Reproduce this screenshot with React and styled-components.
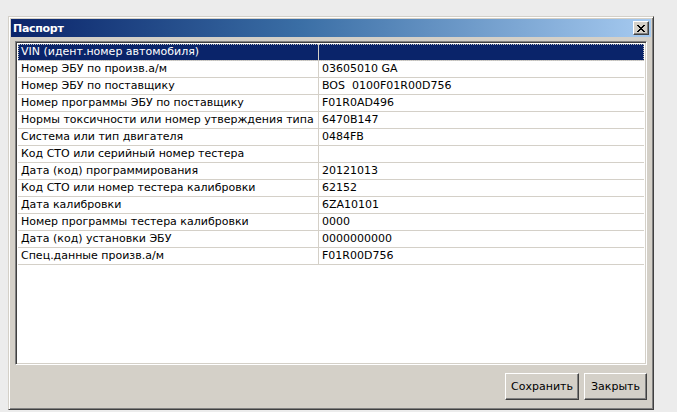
import styled, { createGlobalStyle } from "styled-components";

const GlobalStyle = createGlobalStyle`
    html, body {
        margin: 0;
        padding: 0;
        background: #ececec;
    }
    body {
        font-family: "DejaVu Sans", Tahoma, sans-serif;
    }
`;

const passport = [
    { name: "VIN (идент.номер автомобиля)", value: "" },
    { name: "Номер ЭБУ по произв.а/м", value: "03605010 GA" },
    { name: "Номер ЭБУ по поставщику", value: "BOS  0100F01R00D756" },
    { name: "Номер программы ЭБУ по поставщику", value: "F01R0AD496" },
    { name: "Нормы токсичности или номер утверждения типа", value: "6470B147" },
    { name: "Система или тип двигателя", value: "0484FB" },
    { name: "Код СТО или серийный номер тестера", value: "" },
    { name: "Дата (код) программирования", value: "20121013" },
    { name: "Код СТО или номер тестера калибровки", value: "62152" },
    { name: "Дата калибровки", value: "6ZA10101" },
    { name: "Номер программы тестера калибровки", value: "0000" },
    { name: "Дата (код) установки ЭБУ", value: "0000000000" },
    { name: "Спец.данные произв.а/м", value: "F01R00D756" },
];

const Page = styled.div`
    padding: 16px 0 0 8px;
`;

const Window = styled.div`
    width: 646px;
    height: 394px;
    box-sizing: border-box;
    background: #d4d0c8;
    border: 1px solid;
    border-color: #d4d0c8 #404040 #404040 #d4d0c8;
    box-shadow: inset 1px 1px #ffffff, inset -1px -1px #808080;
    padding: 2px;
    display: flex;
    flex-direction: column;
`;

const TitleBar = styled.div`
    height: 18px;
    display: flex;
    align-items: center;
    justify-content: space-between;
    padding: 0 2px 0 2px;
    background: linear-gradient(to right, #0a246a 0%, #3a6ea5 45%, #a6caf0 100%);
`;

const Title = styled.span`
    color: #ffffff;
    font-weight: bold;
    font-size: 11px;
    letter-spacing: -0.3px;
`;

const CloseButton = styled.button`
    width: 16px;
    height: 14px;
    padding: 0;
    margin: 0;
    background: #d4d0c8;
    border: 1px solid;
    border-color: #ffffff #404040 #404040 #ffffff;
    box-shadow: inset -1px -1px #808080;
    display: flex;
    align-items: center;
    justify-content: center;
`;

const Body = styled.div`
    flex: 1;
    display: flex;
    flex-direction: column;
    padding: 4px 4px 7px 4px;
`;

const ListBox = styled.div`
    height: 324px;
    box-sizing: border-box;
    background: #ffffff;
    border: 1px solid;
    border-color: #808080 #ffffff #ffffff #808080;
    box-shadow: inset 1px 1px #404040, inset -1px -1px #d4d0c8;
    padding: 2px;
`;

const Row = styled.div`
    display: grid;
    grid-template-columns: 301px 1fr;
    height: 17px;
    box-sizing: border-box;
    border-bottom: 1px solid #d4d0c8;
    background: ${({ $selected }) => ($selected ? "#0a246a" : "transparent")};
    color: ${({ $selected }) => ($selected ? "#ffffff" : "#000000")};
    outline: ${({ $selected }) => ($selected ? "1px dotted #c0c0c0" : "none")};
    outline-offset: -1px;
`;

const Cell = styled.div`
    font-size: 11px;
    line-height: 16px;
    padding-left: 3px;
    white-space: pre;
    overflow: hidden;
    border-right: ${({ $first }) => ($first ? "1px solid #d4d0c8" : "none")};
`;

const Footer = styled.div`
    margin-top: 8px;
    display: flex;
    justify-content: flex-end;
    gap: 5px;
`;

const Button = styled.button`
    width: ${({ $w }) => $w}px;
    height: 27px;
    background: #d4d0c8;
    border: 1px solid;
    border-color: #ffffff #404040 #404040 #ffffff;
    box-shadow: inset -1px -1px #808080;
    font-family: "DejaVu Sans", Tahoma, sans-serif;
    font-size: 11px;
    color: #000000;
    padding: 0;
`;

const App = () => {
    return (
        <>
            <GlobalStyle />
            <Page>
                <Window>
                    <TitleBar>
                        <Title>Паспорт</Title>
                        <CloseButton>
                            <svg width="8" height="7" viewBox="0 0 8 7">
                                <path d="M0 0 L7 7 M1 0 L8 7 M7 0 L0 7 M8 0 L1 7" stroke="#000" strokeWidth="1" />
                            </svg>
                        </CloseButton>
                    </TitleBar>
                    <Body>
                        <ListBox>
                            {passport.map((item, i) => (
                                <Row key={item.name} $selected={i === 0}>
                                    <Cell $first>{item.name}</Cell>
                                    <Cell>{item.value}</Cell>
                                </Row>
                            ))}
                        </ListBox>
                        <Footer>
                            <Button $w={74}>Сохранить</Button>
                            <Button $w={63}>Закрыть</Button>
                        </Footer>
                    </Body>
                </Window>
            </Page>
        </>
    );
};

export default App;
